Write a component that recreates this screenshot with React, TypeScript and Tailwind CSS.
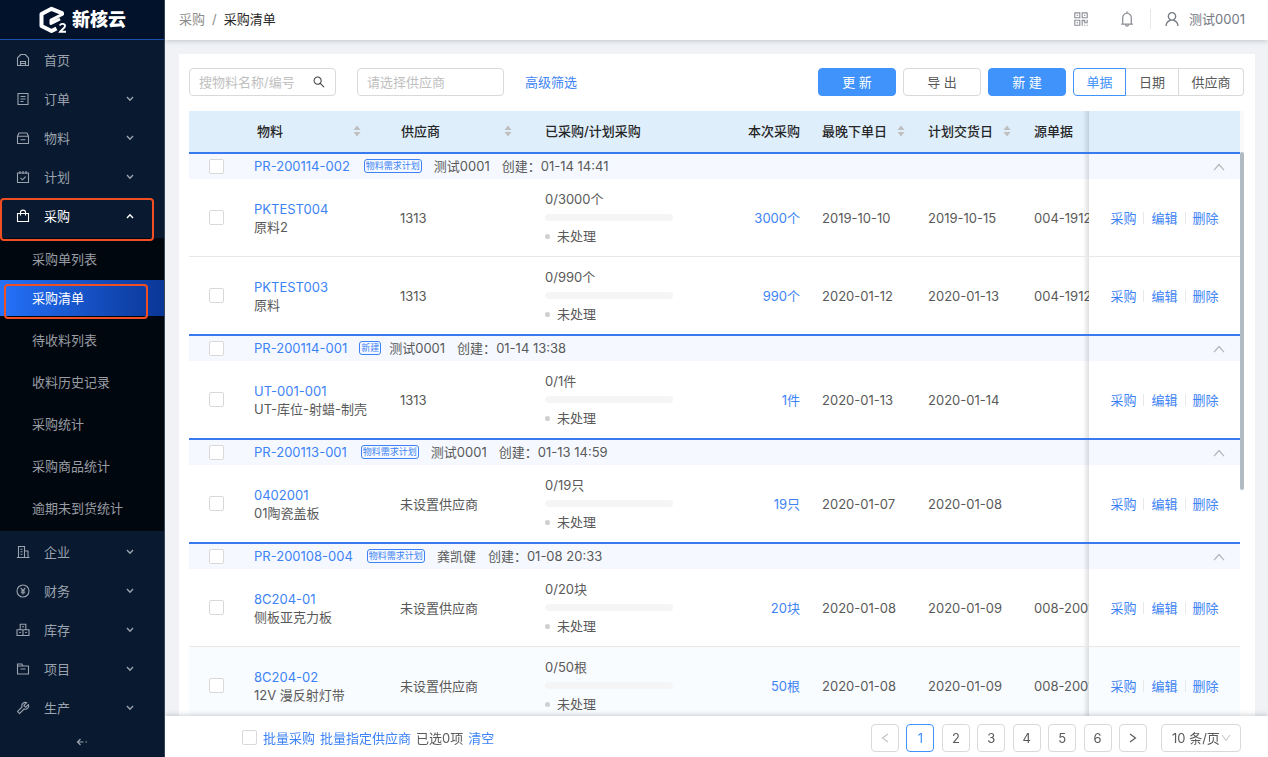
import React from 'react';
import { AiOutlineBell, AiOutlineQrcode, AiOutlineSearch, AiOutlineTool, AiOutlineUser } from 'react-icons/ai';
import clsx from 'clsx';

interface Item {
  code: string;
  name: string;
  supplier: string;
  total: string;
  amount: string;
  orderDate: string;
  planDate: string;
  source: string;
  tinted?: boolean;
}

interface Group {
  id: string;
  tag: string;
  owner: string;
  created: string;
  items: Item[];
}

const groups: Group[] = [
  {
    id: 'PR-200114-002',
    tag: '物料需求计划',
    owner: '测试0001',
    created: '01-14 14:41',
    items: [
      { code: 'PKTEST004', name: '原料2', supplier: '1313', total: '0/3000个', amount: '3000个', orderDate: '2019-10-10', planDate: '2019-10-15', source: '004-1912' },
      { code: 'PKTEST003', name: '原料', supplier: '1313', total: '0/990个', amount: '990个', orderDate: '2020-01-12', planDate: '2020-01-13', source: '004-1912' }
    ]
  },
  {
    id: 'PR-200114-001',
    tag: '新建',
    owner: '测试0001',
    created: '01-14 13:38',
    items: [
      { code: 'UT-001-001', name: 'UT-库位-射蜡-制壳', supplier: '1313', total: '0/1件', amount: '1件', orderDate: '2020-01-13', planDate: '2020-01-14', source: '' }
    ]
  },
  {
    id: 'PR-200113-001',
    tag: '物料需求计划',
    owner: '测试0001',
    created: '01-13 14:59',
    items: [
      { code: '0402001', name: '01陶瓷盖板', supplier: '未设置供应商', total: '0/19只', amount: '19只', orderDate: '2020-01-07', planDate: '2020-01-08', source: '' }
    ]
  },
  {
    id: 'PR-200108-004',
    tag: '物料需求计划',
    owner: '龚凯健',
    created: '01-08 20:33',
    items: [
      { code: '8C204-01', name: '侧板亚克力板', supplier: '未设置供应商', total: '0/20块', amount: '20块', orderDate: '2020-01-08', planDate: '2020-01-09', source: '008-2001' },
      { code: '8C204-02', name: '12V 漫反射灯带', supplier: '未设置供应商', total: '0/50根', amount: '50根', orderDate: '2020-01-08', planDate: '2020-01-09', source: '008-2001', tinted: true }
    ]
  }
];

const Glyph: React.FC<{ children: React.ReactNode }> = ({ children }) => (
  <svg viewBox="0 0 14 14" className="w-3.5 h-3.5 shrink-0" fill="none" stroke="currentColor" strokeWidth="1.1" aria-hidden="true">
    {children}
  </svg>
);

const icons = {
  home: (
    <Glyph>
      <path d="M1.500 4.800 4.800 1.500h4.400L12.500 4.800v7.700h-11z" strokeLinejoin="round" />
      <path d="M4.500 12.500V8.500h5v4M4.500 10.500h5" />
    </Glyph>
  ),
  order: (
    <Glyph>
      <path d="M2 1.500h10v11H2zM4.500 4.500h5M4.500 7h5M4.500 9.500h3" />
    </Glyph>
  ),
  box: (
    <Glyph>
      <path d="M1.500 5.200 3 2h8l1.500 3.200v7.300h-11zM1.500 5.200h11M4.500 8.800h5" strokeLinejoin="round" />
    </Glyph>
  ),
  plan: (
    <Glyph>
      <path d="M1.500 3h11v9.500h-11zM4 1v3M7 1v3M10 1v3M4.500 7.800l2 2 3.200-3.200" />
    </Glyph>
  ),
  bag: (
    <Glyph>
      <path d="M1.500 4.500h11v8h-11zM4.500 6.500V3.300a2.500 2.200 0 0 1 5 0v3.200" />
    </Glyph>
  ),
  company: (
    <Glyph>
      <path d="M2.500 12.500v-11h6v11M8.500 6h3.500v6.500M.8 12.500h12.700M4.500 4.300h2M4.500 6.800h2M4.500 9.300h2" />
    </Glyph>
  ),
  money: (
    <Glyph>
      <circle cx="7" cy="7" r="6" />
      <path d="M4.700 3.800 7 6.600l2.300-2.800M7 6.600v4M4.800 7h4.400M4.800 8.700h4.400" />
    </Glyph>
  ),
  stock: (
    <Glyph>
      <path d="M4.200 1.200h5.600v5.600H4.200zM1 6.800h6v5.700H1zM7 6.800h6v5.700H7zM6 3.700h2M3.200 9.500h1.600M9.200 9.500h1.600" />
    </Glyph>
  ),
  project: (
    <Glyph>
      <path d="M1.500 2h4.300l1.200 2h5.500v8h-11zM1.500 4H7M4.500 7h5" />
    </Glyph>
  ),
  tool: <AiOutlineTool className="w-4 h-4 -mx-px shrink-0" />
};

const topMenu = [
  { label: '首页', icon: icons.home },
  { label: '订单', icon: icons.order, arrow: true },
  { label: '物料', icon: icons.box, arrow: true },
  { label: '计划', icon: icons.plan, arrow: true },
  { label: '采购', icon: icons.bag, arrow: true, open: true }
];

const subMenu = ['采购单列表', '采购清单', '待收料列表', '收料历史记录', '采购统计', '采购商品统计', '逾期未到货统计'];

const bottomMenu = [
  { label: '企业', icon: icons.company, arrow: true },
  { label: '财务', icon: icons.money, arrow: true },
  { label: '库存', icon: icons.stock, arrow: true },
  { label: '项目', icon: icons.project, arrow: true },
  { label: '生产', icon: icons.tool, arrow: true }
];

interface MenuItemProps {
  label: string;
  icon: React.ReactNode;
  arrow?: boolean;
  open?: boolean;
}

const MenuItem: React.FC<MenuItemProps> = ({ label, icon, arrow, open }) => (
  <li className="relative">
    <a
      href="#"
      className={clsx('flex items-center h-[39px] pl-4 pr-[30px]', open ? 'text-white' : 'text-[#9ba3ae]')}
    >
      {icon}
      <span className="ml-3.5 flex-1">{label}</span>
      {arrow && (
        <svg viewBox="0 0 8 6" className={clsx('w-2 h-1.5', open && 'rotate-180')} fill="none" stroke="currentColor" strokeWidth="1.4">
          <path d="M1 1l3 3.200L7 1" />
        </svg>
      )}
    </a>
    {open && <span className="absolute left-0 top-0.5 w-[154px] h-[43px] border-2 border-[#f04e23] rounded pointer-events-none z-10" />}
  </li>
);

const Sidebar = () => (
  <aside className="w-[165px] shrink-0 flex flex-col bg-[#09192f] border-r border-[#3a465a] overflow-hidden">
    <div className="h-10 shrink-0 flex items-center justify-center gap-1 bg-[#03122b] border-b border-[#1c4fae] text-white">
      <svg viewBox="0 0 30 28" className="w-[30px] h-7" fill="none" stroke="currentColor" aria-hidden="true">
        <path d="M24 9V7.200L13.500 2.800 3.500 8v12l10 5 5-2.500" strokeWidth="4" strokeLinejoin="round" />
        <path d="M25 8 13 14.200v3.300l9-4.500" strokeWidth="3" strokeLinejoin="round" />
        <path d="M22 19.700c.4-2.600 5.400-2.400 5 .5-.2 1.900-3 3.200-4.800 5.500H28" strokeWidth="1.900" />
      </svg>
      <span className="text-lg font-black">新核云</span>
    </div>
    <nav className="flex-1 flex flex-col">
      <ul>
        {topMenu.map((item) => (
          <MenuItem key={item.label} {...item} />
        ))}
      </ul>
      <ul className="mt-[3px] pt-[3px] pb-[5px] bg-[#01070f] flex flex-col gap-1.5">
        {subMenu.map((label, index) => (
          <li key={label} className={clsx('relative', index === 0 && '-mb-[3px]')}>
            <a
              href="#"
              className={clsx(
                'flex items-center h-9 pl-8',
                label === '采购清单' ? 'text-white bg-linear-to-r from-[#2472fb] to-[#0a3696]' : 'text-[#999da3]'
              )}
            >
              {label}
            </a>
            {label === '采购清单' && (
              <span className="absolute left-1 top-1 w-36 h-[35px] border-2 border-[#f04e23] rounded pointer-events-none" />
            )}
          </li>
        ))}
      </ul>
      <ul className="mt-px">
        {bottomMenu.map((item) => (
          <MenuItem key={item.label} {...item} />
        ))}
      </ul>
      <button aria-label="收起菜单" className="flex-1 flex items-center justify-center text-[#9ba3ae]">
        <svg viewBox="0 0 12 8" className="w-3 h-2" fill="none" stroke="currentColor" strokeWidth="1.200">
          <path d="M4.500 1 1.500 4l3 3M2 4h5.500M9.500 4H11" />
        </svg>
      </button>
    </nav>
  </aside>
);

const Header = () => (
  <header className="relative z-20 h-10 shrink-0 flex items-center bg-white pl-3.5 pr-[23px] pb-0.5 shadow-[0_1px_5px_rgba(0,21,41,0.2)]">
    <div className="flex items-center gap-[7px] flex-1">
      <a href="#" className="text-[#8c8c8c]">采购</a>
      <span className="text-[#8c8c8c]">/</span>
      <span className="text-[#262626]">采购清单</span>
    </div>
    <button aria-label="二维码" className="text-[#8c8f96]">
      <AiOutlineQrcode className="w-[18px] h-[18px]" />
    </button>
    <button aria-label="通知" className="ml-7 text-[#8c8f96]">
      <AiOutlineBell className="w-[18px] h-[18px]" />
    </button>
    <div className="w-px h-5 bg-[#e8e8e8] ml-3.5 mr-3" />
    <a href="#" className="flex items-center text-[#737882]">
      <AiOutlineUser className="w-[18px] h-[18px] mr-2" />
      测试0001
    </a>
  </header>
);

const primaryButton = 'w-[78px] h-7 rounded bg-[#4093fb] border border-[#4093fb] text-white';
const plainButton = 'w-[78px] h-7 rounded bg-white border border-[#d9d9d9] text-[#595959]';
const inputStyle = 'w-[147px] h-7 border border-[#d9d9d9] rounded px-[9px] placeholder:text-[#bfbfbf] outline-none';

const Toolbar = () => (
  <div className="flex items-center mr-[11px]">
    <label className="relative mr-[21px]">
      <input type="text" aria-label="搜物料名称/编号" placeholder="搜物料名称/编号" className={inputStyle} />
      <AiOutlineSearch className="absolute right-2.5 top-[7px] w-3.5 h-3.5 text-[#434343]" />
    </label>
    <input type="text" aria-label="请选择供应商" placeholder="请选择供应商" className={inputStyle} />
    <a href="#" className="ml-[21px] text-[#3d83f5]">高级筛选</a>
    <div className="flex gap-[7px] ml-auto">
      <button className={primaryButton}>更 新</button>
      <button className={plainButton}>导 出</button>
      <button className={primaryButton}>新 建</button>
      <div className="flex h-7">
        <button className="w-[53px] border border-[#4093fb] rounded-l text-[#4093fb]">单据</button>
        <button className="w-[53px] border-y border-r border-[#d9d9d9]">日期</button>
        <button className="w-[65px] border-y border-r border-[#d9d9d9] rounded-r">供应商</button>
      </div>
    </div>
  </div>
);

const SortIcon = () => (
  <svg viewBox="0 0 8 12" className="w-2 h-3" fill="#bfbfbf" aria-hidden="true">
    <path d="M4 .5 7.500 5H.5zM4 11.500 7.500 7H.5z" />
  </svg>
);

const Check: React.FC<{ label: string }> = ({ label }) => (
  <input
    type="checkbox"
    aria-label={label}
    className="block appearance-none w-[15px] h-[15px] border border-[#d9d9d9] rounded-xs bg-white checked:bg-[#4093fb]"
  />
);

// pinned right column, with its shadow falling on the columns that scroll under it
const pinned =
  "sticky right-0 z-10 before:content-[''] before:absolute before:inset-y-0 before:-left-1.5 before:w-1.5 before:bg-linear-to-l before:from-black/12 before:to-transparent";

const columns = [
  { title: '物料', sort: true, style: 'pl-[13px] pr-[29px]' },
  { title: '供应商', sort: true, style: 'pl-[11px] pr-[23px]' },
  { title: '已采购/计划采购', style: 'pl-2.5' },
  { title: '本次采购', style: 'pr-2.5 justify-end' },
  { title: '最晚下单日', sort: true, style: 'pl-3 pr-[11px]' },
  { title: '计划交货日', sort: true, style: 'pl-3 pr-[11px]' },
  { title: '源单据', style: 'pl-3' }
];

const GroupRow: React.FC<{ group: Group }> = ({ group }) => (
  <tr className="h-[27px] bg-[#f5f9ff]">
    <td className="border-t-2 border-[#3a7af0] pl-5">
      <Check label={group.id} />
    </td>
    <td colSpan={7} className="border-t-2 border-[#3a7af0] pl-2.5 pb-px">
      <div className="flex items-center">
        <a href="#" className="text-[#3d83f5]">{group.id}</a>
        <span
          className={clsx(
            'border border-[#3d83f5] rounded-[3px] px-px text-[9px] leading-3 text-[#3d83f5]',
            group.tag.length > 2 ? 'ml-3.5 mr-3' : 'ml-3 mr-2'
          )}
        >
          {group.tag}
        </span>
        <span className="mr-3">{group.owner}</span>
        <span>创建：</span>
        <span>{group.created}</span>
      </div>
    </td>
    <td className={clsx(pinned, 'border-t-2 border-[#3a7af0] bg-[#f5f9ff]')}>
      <button aria-label="收起" className="flex ml-auto mr-[15px]">
        <svg viewBox="0 0 12 8" className="w-3 h-2" fill="none" stroke="#b5b5b5" strokeWidth="1.200">
          <path d="M1 7.200 6 1.500l5 5.700" />
        </svg>
      </button>
    </td>
  </tr>
);

const ItemRow: React.FC<{ item: Item; last: boolean }> = ({ item, last }) => {
  const bg = item.tinted ? 'bg-[#f9fcff]' : 'bg-white';
  const line = last ? '' : 'border-b border-[#e8e8e8]';

  return (
    <tr className={clsx(bg, last ? 'h-[77px]' : 'h-[78px]')}>
      <td className={clsx(line, 'pl-5')}>
        <Check label={item.code} />
      </td>
      <td className={clsx(line, 'pl-2.5')}>
        <a href="#" className="block text-[#3d83f5]">{item.code}</a>
        <p>{item.name}</p>
      </td>
      <td className={clsx(line, 'pl-2.5')}>{item.supplier}</td>
      <td className={clsx(line, 'pl-2.5')}>
        <p>{item.total}</p>
        <div className="w-32 h-[7px] my-1.5 rounded-full bg-[#f5f5f5]" />
        <p className="flex items-center">
          <span className="w-[5px] h-[5px] rounded-full bg-[#d0d0d0] mr-[7px]" />
          未处理
        </p>
      </td>
      <td className={clsx(line, 'pr-2.5 text-right text-[#3d83f5]')}>{item.amount}</td>
      <td className={clsx(line, 'pl-3')}>{item.orderDate}</td>
      <td className={clsx(line, 'pl-3')}>{item.planDate}</td>
      <td className={clsx(line, 'pl-3')}>{item.source}</td>
      <td className={clsx(line, pinned, bg)}>
        <div className="flex items-center justify-center divide-x divide-[#e8e8e8] text-[#3d83f5] leading-3">
          <a href="#" className="px-[7px]">采购</a>
          <a href="#" className="px-[7px]">编辑</a>
          <a href="#" className="px-[7px]">删除</a>
        </div>
      </td>
    </tr>
  );
};

const PurchaseTable = () => (
  <div className="relative flex-1 min-h-0 mt-[15px] mr-[11px] pr-1">
    <div className="h-full overflow-hidden">
      <table className="table-fixed w-full min-w-[1136px] border-separate border-spacing-0">
        <colgroup>
          <col className="w-[55px]" />
          <col className="w-[146px]" />
          <col className="w-[145px]" />
          <col className="w-[170px]" />
          <col className="w-[105px]" />
          <col className="w-[106px]" />
          <col className="w-[106px]" />
          <col />
          <col className="w-[151px]" />
        </colgroup>
        <thead>
          <tr className="h-[41px] bg-[#dfeefb] text-[#262626]">
            <th />
            {columns.map((column) => (
              <th key={column.title} className="font-medium text-left pb-0.5">
                <div className={clsx('flex items-center justify-between', column.style)}>
                  {column.title}
                  {column.sort && <SortIcon />}
                </div>
              </th>
            ))}
            <th className={clsx(pinned, 'bg-[#dfeefb]')} />
          </tr>
        </thead>
        <tbody>
          {groups.map((group) => (
            <React.Fragment key={group.id}>
              <GroupRow group={group} />
              {group.items.map((item, index) => (
                <ItemRow key={item.code} item={item} last={index === group.items.length - 1} />
              ))}
            </React.Fragment>
          ))}
        </tbody>
      </table>
    </div>
    <div className="absolute right-0 top-0 w-1 h-[41px] bg-[#fafafa]" />
    <div className="absolute right-0 top-[41px] w-1 h-[338px] rounded-full bg-[#b0bac3]" />
  </div>
);

const pageButton = 'w-7 h-7 flex items-center justify-center rounded border bg-white';

const Footer = () => (
  <footer className="relative z-20 h-[41px] shrink-0 flex items-center bg-white pl-[77px] pr-[27px] pt-0.5 shadow-[0_-1px_5px_rgba(0,21,41,0.2)]">
    <Check label="全选" />
    <div className="flex gap-[5px] ml-1.5">
      <a href="#" className="text-[#3d83f5]">批量采购</a>
      <a href="#" className="text-[#3d83f5]">批量指定供应商</a>
      <span>已选0项</span>
      <a href="#" className="text-[#3d83f5]">清空</a>
    </div>
    <nav className="w-[276px] flex justify-between ml-auto mr-3.5">
      <button aria-label="上一页" className={clsx(pageButton, 'border-[#d9d9d9] text-[#c4c4c4]')}>
        <svg viewBox="0 0 8 10" className="w-2 h-2.5" fill="none" stroke="currentColor" strokeWidth="1.200">
          <path d="M7 1 1.500 5 7 9" />
        </svg>
      </button>
      {[1, 2, 3, 4, 5, 6].map((page) => (
        <button
          key={page}
          className={clsx(pageButton, page === 1 ? 'border-[#4093fb] text-[#4093fb]' : 'border-[#d9d9d9]')}
        >
          {page}
        </button>
      ))}
      <button aria-label="下一页" className={clsx(pageButton, 'border-[#d9d9d9]')}>
        <svg viewBox="0 0 8 10" className="w-2 h-2.5" fill="none" stroke="currentColor" strokeWidth="1.200">
          <path d="M1 1l5.500 4L1 9" />
        </svg>
      </button>
    </nav>
    <label className="relative">
      <select aria-label="每页条数" className="block w-20 h-7 appearance-none border border-[#d9d9d9] rounded pl-2.5 bg-white outline-none">
        <option>10 条/页</option>
        <option>20 条/页</option>
        <option>50 条/页</option>
      </select>
      <svg viewBox="0 0 10 8" className="absolute right-2.5 top-2.5 w-2.5 h-2 pointer-events-none" fill="none" stroke="#bfbfbf">
        <path d="M1 1l4 5.500L9 1" />
      </svg>
    </label>
  </footer>
);

const App = () => (
  <div className="h-screen flex overflow-hidden bg-[#f0f2f5] text-[13px] leading-[18px] text-[#595959] font-['Inter','Noto_Sans_CJK_SC',sans-serif]">
    <Sidebar />
    <div className="flex-1 min-w-0 flex flex-col">
      <Header />
      <main className="flex-1 min-h-0 flex flex-col mt-3.5 ml-3.5 mr-[13px] pt-3.5 pl-2.5 bg-white">
        <Toolbar />
        <PurchaseTable />
      </main>
      <Footer />
    </div>
  </div>
);

export default App;
